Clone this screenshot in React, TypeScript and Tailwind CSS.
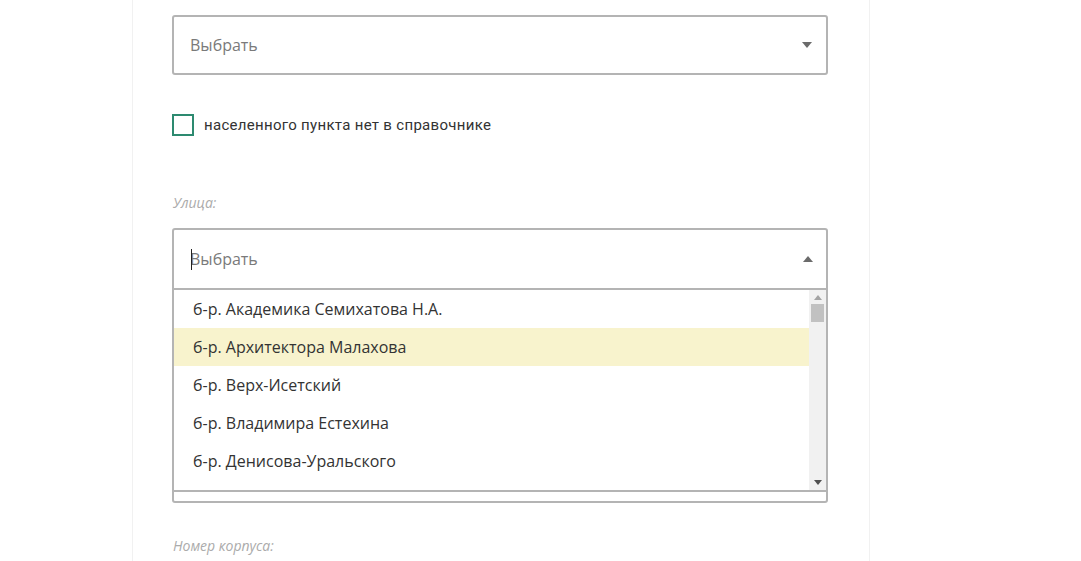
const streets = [
  "б-р. Академика Семихатова Н.А.",
  "б-р. Архитектора Малахова",
  "б-р. Верх-Исетский",
  "б-р. Владимира Естехина",
  "б-р. Денисова-Уральского",
];

function Caret({ up }: { up?: boolean }) {
  return (
    <svg width="10" height="6" viewBox="0 0 10 6" className="text-[#6b6b6b]">
      <path d={up ? "M0 6 L5 0 L10 6 Z" : "M0 0 L10 0 L5 6 Z"} fill="currentColor" />
    </svg>
  );
}

export default function App() {
  return (
    <div className="h-[561px] w-full overflow-hidden bg-white font-['Open_Sans',sans-serif]">
      <div className="ml-[132px] h-full w-[738px] border-x border-[#f1f1f1] pl-[39px] pr-[41px] pt-[15px]">
        <div className="flex h-[60px] items-center justify-between rounded-[3px] border-2 border-[#b4b4b4] pl-[16px] pr-[14px]">
          <span className="text-[16px] text-[#7a7a7a]">Выбрать</span>
          <Caret />
        </div>

        <label className="mt-[39px] flex h-[22px] items-center gap-[10px]">
          <span className="h-[22px] w-[22px] border-2 border-[#2d8a70]" />
          <span className="font-['Roboto',sans-serif] text-[15px] tracking-[0.3px] text-[#333]">
            населенного пункта нет в справочнике
          </span>
        </label>

        <div className="mt-[57px] pl-px text-[14px] leading-[20px] italic text-[#ababab]">Улица:</div>

        <div className="mt-[15px] rounded-[3px] border-2 border-[#b4b4b4]">
          <div className="flex h-[58px] items-center justify-between pl-[16px] pr-[13px]">
            <span className="relative text-[16px] text-[#7a7a7a]">
              <span className="absolute left-[1px] top-[2px] h-[21px] w-px bg-[#222]" />
              Выбрать
            </span>
            <Caret up />
          </div>
          <div className="flex h-[202px] border-t-2 border-[#b4b4b4]">
            <ul className="flex-1">
              {streets.map((s, i) => (
                <li
                  key={s}
                  className={`flex h-[38px] items-center pl-[19px] text-[16px] text-[#333] ${
                    i === 1 ? "bg-[#f8f3cd]" : ""
                  }`}
                >
                  {s}
                </li>
              ))}
            </ul>
            <div className="flex w-[17px] flex-col items-center bg-[#f1f1f1] py-[5px]">
              <svg width="8" height="5" viewBox="0 0 8 5">
                <path d="M0 5 L4 0 L8 5 Z" fill="#a3a3a3" />
              </svg>
              <div className="mt-[4px] h-[18px] w-[13px] bg-[#c1c1c1]" />
              <div className="flex-1" />
              <svg width="8" height="5" viewBox="0 0 8 5">
                <path d="M0 0 L8 0 L4 5 Z" fill="#505050" />
              </svg>
            </div>
          </div>
          <div className="h-[11px] border-t-2 border-[#b4b4b4]" />
        </div>

        <div className="mt-[33px] pl-px text-[14px] leading-[20px] italic text-[#ababab]">Номер корпуса:</div>
      </div>
    </div>
  );
}
